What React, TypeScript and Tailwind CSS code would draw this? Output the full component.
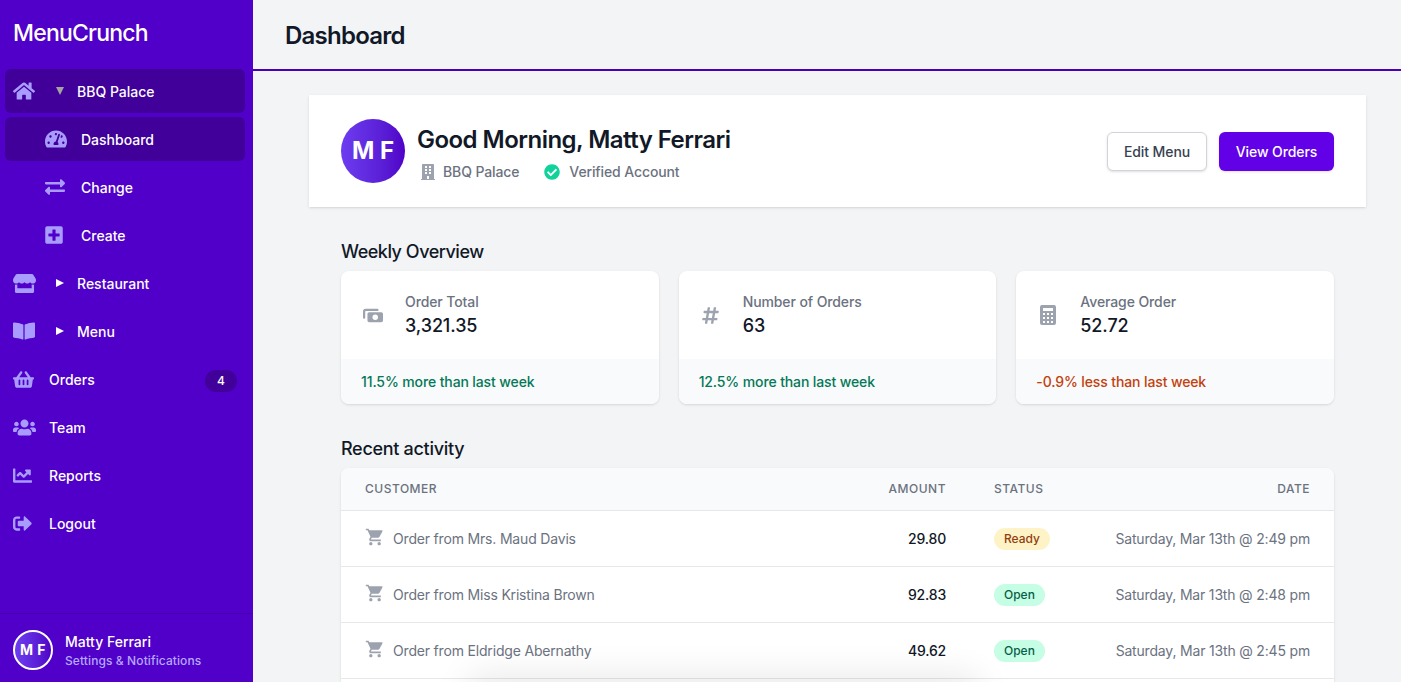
import type { ReactNode } from 'react';
import {
  FaBookOpen,
  FaBuilding,
  FaChartLine,
  FaCheckCircle,
  FaExchangeAlt,
  FaHashtag,
  FaHome,
  FaPlusSquare,
  FaShoppingBasket,
  FaSignOutAlt,
  FaStore,
  FaTachometerAlt,
  FaUsers,
} from 'react-icons/fa';
import { MdShoppingCart } from 'react-icons/md';

function BillsIcon() {
  return (
    <svg width="20" height="15" viewBox="1 3.5 18 13" fill="currentColor">
      <path d="M1 6.5A2.5 2.5 0 0 1 3.5 4H14a1 1 0 0 1 0 2H3.5a.5.5 0 0 0-.5.5V12a1 1 0 0 1-2 0V6.5z" />
      <path
        fillRule="evenodd"
        d="M6.5 7h11A1.5 1.5 0 0 1 19 8.5v6a1.5 1.5 0 0 1-1.5 1.5h-11A1.5 1.5 0 0 1 5 14.5v-6A1.5 1.5 0 0 1 6.5 7zm5.5 7a2.5 2.5 0 1 0 0-5 2.5 2.5 0 0 0 0 5z"
      />
    </svg>
  );
}

function CalculatorIcon() {
  return (
    <svg width="16" height="20" viewBox="0 0 16 20" fill="currentColor">
      <path
        fillRule="evenodd"
        d="M2 0h12a2 2 0 0 1 2 2v16a2 2 0 0 1-2 2H2a2 2 0 0 1-2-2V2a2 2 0 0 1 2-2zm1 3v3h10V3H3zm0 5v2h2V8H3zm4 0v2h2V8H7zm4 0v2h2V8h-2zm-8 4v2h2v-2H3zm4 0v2h2v-2H7zm4 0v2h2v-2h-2zm-8 4v2h2v-2H3zm4 0v2h2v-2H7zm4 0v2h2v-2h-2z"
      />
    </svg>
  );
}

function NavRow({
  icon,
  label,
  arrow,
  active,
  sub,
  badge,
}: {
  icon: ReactNode;
  label: string;
  arrow?: 'open' | 'closed';
  active?: boolean;
  sub?: boolean;
  badge?: string;
}) {
  return (
    <div
      className={`flex h-11 items-center rounded-md pr-2 text-sm font-medium text-white ${
        active ? 'bg-[#400099]' : ''
      } ${sub ? 'pl-10' : 'pl-2'}`}
    >
      <span className="flex w-[36px] shrink-0 items-center text-[#a99cff]">{icon}</span>
      {arrow === 'open' && <span className="ml-[7px] mr-[13px] h-0 w-0 border-x-[4px] border-t-[8px] border-x-transparent border-t-[#a3a3a3]" />}
      {arrow === 'closed' && <span className="ml-[7px] mr-[13px] h-0 w-0 border-y-[4px] border-l-[8px] border-y-transparent border-l-white" />}
      <span className="pt-[2px]">{label}</span>
      {badge && (
        <span className="ml-auto mt-[4px] flex h-[22px] w-8 items-center justify-center rounded-full bg-[#400099] text-xs">{badge}</span>
      )}
    </div>
  );
}

function Sidebar() {
  return (
    <aside className="flex h-full w-[253px] shrink-0 flex-col bg-[#5000c8]">
      <div className="flex h-[69px] items-start pl-[13px] pt-[16px] text-[23px] font-medium tracking-[-0.8px] text-white">MenuCrunch</div>
      <nav className="flex flex-1 flex-col gap-1 pl-[5px] pr-2">
        <NavRow icon={<FaHome size={22} />} label="BBQ Palace" arrow="open" active />
        <NavRow icon={<FaTachometerAlt size={22} />} label="Dashboard" sub active />
        <NavRow icon={<FaExchangeAlt size={20} />} label="Change" sub />
        <NavRow icon={<FaPlusSquare size={20} className="-ml-[1px]" />} label="Create" sub />
        <NavRow icon={<FaStore size={23} />} label="Restaurant" arrow="closed" />
        <NavRow icon={<FaBookOpen size={22} />} label="Menu" arrow="closed" />
        <NavRow icon={<FaShoppingBasket size={21} />} label="Orders" badge="4" />
        <NavRow icon={<FaUsers size={23} />} label="Team" />
        <NavRow icon={<FaChartLine size={19} />} label="Reports" />
        <NavRow icon={<FaSignOutAlt size={19} />} label="Logout" />
      </nav>
      <div className="flex h-[69px] items-start gap-3 border-t border-[#4500ac] pl-[13px] pt-[16px]">
        <div className="flex h-10 w-10 items-center justify-center rounded-full border-2 border-white bg-gradient-to-r from-[#6d3cf0] to-[#5000c8] text-sm font-bold tracking-[0.5px] text-white">
          M F
        </div>
        <div className="mt-[3px]">
          <div className="text-sm font-medium leading-[18px] text-white">Matty Ferrari</div>
          <div className="mt-[1px] text-xs font-medium leading-[18px] tracking-[0.1px] text-[#b5a8ff]">Settings &amp; Notifications</div>
        </div>
      </div>
    </aside>
  );
}

function StatCard({
  icon,
  label,
  value,
  note,
  noteColor,
}: {
  icon: ReactNode;
  label: string;
  value: string;
  note: string;
  noteColor: string;
}) {
  return (
    <div className="overflow-hidden rounded-lg bg-white shadow">
      <div className="flex h-[88px] items-center pl-5">
        <span className="mr-5 flex w-6 shrink-0 justify-center text-[#9ca3af]">{icon}</span>
        <div className="mt-[2px]">
          <div className="text-sm font-medium leading-5 tracking-[-0.1px] text-[#6b7280]">{label}</div>
          <div className="text-lg font-medium leading-7 tracking-[-0.1px] text-[#111827]">{value}</div>
        </div>
      </div>
      <div className={`flex h-[45px] items-center bg-[#f9fafb] pl-5 text-sm font-medium tracking-[-0.12px] ${noteColor}`}>{note}</div>
    </div>
  );
}

const orders = [
  { name: 'Order from Mrs. Maud Davis', amount: '29.80', status: 'Ready', date: 'Saturday, Mar 13th @ 2:49 pm' },
  { name: 'Order from Miss Kristina Brown', amount: '92.83', status: 'Open', date: 'Saturday, Mar 13th @ 2:48 pm' },
  { name: 'Order from Eldridge Abernathy', amount: '49.62', status: 'Open', date: 'Saturday, Mar 13th @ 2:45 pm' },
];

export default function App() {
  return (
    <div className="flex h-screen overflow-hidden bg-[#f3f4f6] font-['Inter',sans-serif]">
      <Sidebar />
      <main className="relative flex min-w-0 flex-1 flex-col overflow-hidden">
        <header className="flex h-[71px] shrink-0 items-center border-b-2 border-[#4a00b8] pl-8 pt-[2px] text-2xl font-semibold tracking-[-0.75px] text-[#111827]">
          Dashboard
        </header>

        <div className="ml-14 w-[1057px] pt-6">
          {/* Greeting */}
          <section className="flex h-[112px] items-center justify-between bg-white px-8 shadow">
            <div className="flex items-center gap-3">
              <div className="flex h-16 w-16 items-center justify-center rounded-full bg-gradient-to-r from-[#6d3cf0] to-[#5000c8] text-2xl font-bold text-white">
                M F
              </div>
              <div className="pt-1">
                <h1 className="text-2xl font-semibold leading-8 tracking-[-0.53px] text-[#111827]">Good Morning, Matty Ferrari</h1>
                <div className="mt-[6px] flex items-center text-sm font-medium tracking-[-0.12px] text-[#6b7280]">
                  <FaBuilding size={16} className="ml-[3px] mr-[7px] text-[#9ca3af]" />
                  <span>BBQ Palace</span>
                  <FaCheckCircle size={16} className="ml-[25px] mr-[9px] text-[#10d39b]" />
                  <span>Verified Account</span>
                </div>
              </div>
            </div>
            <div className="flex gap-3">
              <button className="h-[39px] w-[100px] rounded-md border border-[#d1d5db] bg-white pt-[2px] text-sm font-medium tracking-[-0.08px] text-[#374151] shadow-sm">Edit Menu</button>
              <button className="h-[39px] w-[115px] rounded-md bg-[#6200e8] pt-[2px] text-sm font-medium tracking-[-0.08px] text-white shadow-sm">View Orders</button>
            </div>
          </section>

          <div className="px-8">
            {/* Weekly overview */}
            <h2 className="mt-8 pt-[1px] text-lg font-medium leading-[23px] tracking-[-0.48px] text-[#111827]">Weekly Overview</h2>
            <div className="mt-2 grid grid-cols-3 gap-5">
              <StatCard icon={<BillsIcon />} label="Order Total" value="3,321.35" note="11.5% more than last week" noteColor="text-[#047857]" />
              <StatCard icon={<FaHashtag size={19} />} label="Number of Orders" value="63" note="12.5% more than last week" noteColor="text-[#047857]" />
              <StatCard icon={<CalculatorIcon />} label="Average Order" value="52.72" note="-0.9% less than last week" noteColor="text-[#c2410c]" />
            </div>

            {/* Recent activity */}
            <h2 className="mt-8 pt-[1px] text-lg font-medium leading-[23px] tracking-[-0.3px] text-[#111827]">Recent activity</h2>
            <div className="mt-2 overflow-hidden rounded-lg bg-white shadow">
              <div className="flex h-[43px] items-center border-b border-[#e5e7eb] bg-[#f9fafb] px-6 text-xs font-medium tracking-[0.5px] text-[#6b7280]">
                <span className="flex-1">CUSTOMER</span>
                <span className="w-[100px] text-right">AMOUNT</span>
                <span className="ml-12 w-[100px] flex-none">STATUS</span>
                <span className="w-[216px] text-right">DATE</span>
              </div>
              {orders.map((order) => (
                <div key={order.name} className="flex h-14 items-center border-b border-[#e5e7eb] px-6 text-sm tracking-[-0.18px]">
                  <span className="flex flex-1 items-center text-[#6b7280]">
                    <MdShoppingCart size={20} className="-mt-[3px] mr-2 text-[#9ca3af]" />
                    {order.name}
                  </span>
                  <span className="w-[100px] text-right font-medium text-[#111827]">{order.amount}</span>
                  <span className="ml-12 w-[100px] flex-none">
                    <span
                      className={`inline-flex h-[22px] items-center rounded-full px-2.5 text-xs font-medium tracking-normal ${
                        order.status === 'Ready' ? 'bg-[#fef3c7] text-[#92400e]' : 'bg-[#c6fde5] text-[#065f46]'
                      }`}
                    >
                      {order.status}
                    </span>
                  </span>
                  <span className="w-[216px] text-right text-[#6b7280]">{order.date}</span>
                </div>
              ))}
              <div className="h-14" />
            </div>
          </div>
        </div>

        {/* shadow of a toast sitting just below the fold */}
        <div className="absolute -bottom-[30px] left-[215px] h-[30px] w-[510px] rounded-lg shadow-[0_-4px_36px_rgba(0,0,0,0.11)]" />
      </main>
    </div>
  );
}
